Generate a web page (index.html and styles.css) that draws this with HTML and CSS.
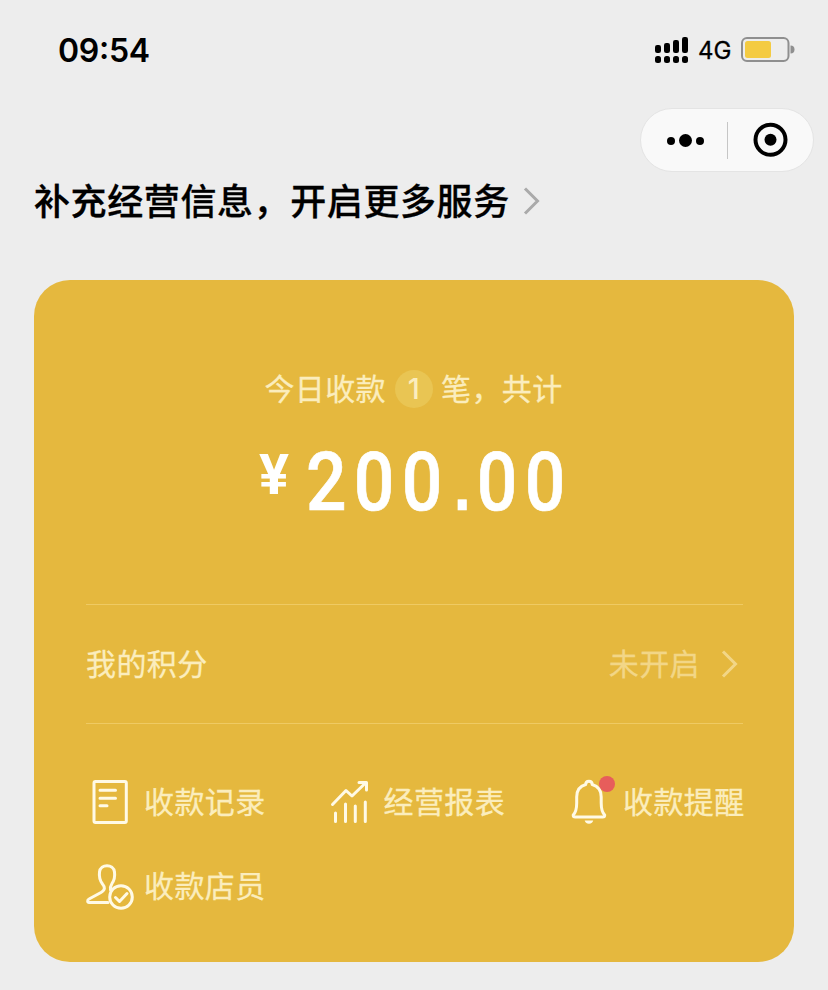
FILE: index.html
```html
<!DOCTYPE html>
<html lang="zh-CN">
<head>
<meta charset="utf-8">
<title>收款</title>
<link rel="stylesheet" href="styles.css">
</head>
<body>
<header class="status">
  <span class="time">09:54</span>
  <div class="status-right">
    <svg class="signal" width="34" height="28" viewBox="0 0 34 28">
      <g><rect x="0" y="8" width="6" height="8" rx="2.200"/><rect x="9" y="6" width="6" height="10" rx="2.200"/><rect x="18" y="3" width="6" height="13" rx="2.200"/><rect x="27" y="0" width="6" height="16" rx="2.200"/>
      <rect x="0" y="19" width="6" height="7" rx="2.500"/><rect x="9" y="19" width="6" height="7" rx="2.500"/><rect x="18" y="19" width="6" height="7" rx="2.500"/><rect x="27" y="19" width="6" height="7" rx="2.500"/></g>
    </svg>
    <span class="network">4G</span>
    <svg class="battery" width="54" height="26" viewBox="0 0 54 26">
      <rect x="1" y="1" width="46.5" height="23" rx="5" fill="none" stroke="#8f8f8f" stroke-width="2"/>
      <rect x="4" y="4" width="26" height="17" rx="2.5" fill="#f4cb42"/>
      <path d="M49.500 8.500a4 4 0 0 1 0 8z" fill="#8f8f8f"/>
    </svg>
  </div>
</header>
<div class="capsule-row">
  <div class="capsule">
    <svg class="more" width="86" height="62" viewBox="0 0 86 62"><circle cx="30" cy="32" r="4"/><circle cx="44.500" cy="31.500" r="6.500"/><circle cx="59" cy="32" r="4"/></svg>
    <span class="capsule-line"></span>
    <svg class="close" width="84" height="62" viewBox="0 0 84 62"><circle cx="42.500" cy="30.800" r="15" fill="none" stroke="#000" stroke-width="4"/><circle cx="42.500" cy="30.800" r="6"/></svg>
  </div>
</div>
<div class="notice">
  <h1>补充经营信息，开启更多服务</h1>
  <svg width="18" height="30" viewBox="0 0 18 30"><path d="M2 2.500L14.500 15L2 27.500" fill="none" stroke="#aaa" stroke-width="3"/></svg>
</div>
<main class="card">
  <div class="summary"><span class="label">今日收款</span><span class="count">1</span><span class="label">笔，共计</span></div>
  <div class="amount"><span class="yen">¥</span><span class="value">200<span class="point">.</span>00</span></div>
  <div class="points">
    <span class="label">我的积分</span>
    <div class="points-state"><span class="label">未开启</span>
      <svg width="18" height="30" viewBox="0 0 18 30"><path d="M2 2.500L14.500 15L2 27.500" fill="none" stroke="currentColor" stroke-width="3"/></svg>
    </div>
  </div>
  <nav class="menu">
    <a class="item"><svg width="50" height="50" viewBox="0 0 50 50"><rect x="8" y="4.500" width="32.300" height="41" rx="1.500"/><path d="M14 13.300h15.500M14 21.300h15.500M14 28.800h7"/></svg><span class="label">收款记录</span></a>
    <a class="item"><svg width="50" height="50" viewBox="0 0 50 50"><path d="M6.500 27.500L20 13.500L26 19L39.500 6M33 5.500H40.500V13M9.500 36v8.500M19.500 27v17.500M29.300 29v15.500M39.300 25v19.500"/></svg><span class="label">经营报表</span></a>
    <a class="item"><svg width="50" height="50" viewBox="0 0 50 50"><g transform="translate(-.8 -2)"><path d="M9 40C12 37 12.500 34 12.500 28V22C12.500 15 16 11 21.500 9.500C21.500 5 28 5 28 9.500C33.500 11 37 15 37 22V28C37 34 37.500 37 40.500 40C40.500 41.500 40 42 38.500 42H11C9.500 42 9 41.500 9 40z"/><path class="solid" d="M20.500 45.500h8.500a4.300 3.700 0 0 1-8.500 0z"/></g><circle class="dot" cx="42" cy="7" r="8"/></svg><span class="label">收款提醒</span></a>
    <a class="item"><svg width="50" height="50" viewBox="0 0 50 50"><path d="M22 41.500H3C1.500 41.500 1 39 3 38L15 31.500C19.500 29 19 26 16.500 23C13.500 19 13 15 13.500 11C14.500 2.500 27.500 2.500 28.500 11C29 15 28.500 19 26 22.500C24.500 25 24 26.500 24.500 29"/><circle cx="35" cy="36" r="11.300"/><path d="M29.500 36.500l4 4l7.500-8"/></svg><span class="label">收款店员</span></a>
  </nav>
</main>
</body>
</html>
```

FILE: styles.css
```css
* { box-sizing: border-box; }
body {
  margin: 0;
  height: 990px;
  overflow: hidden;
  background: #ededed;
  color: #000;
  font-family: "Noto Sans CJK SC", sans-serif;
}
svg { display: block; flex: none; }
.status {
  display: flex;
  align-items: center;
  justify-content: space-between;
  height: 100px;
  padding: 0 33px 0 58px;
  font-family: Inter, sans-serif;
}
.time { font-size: 32px; font-weight: 600; letter-spacing: -.3px; font-feature-settings: "case"; }
.status-right { display: flex; align-items: center; }
.signal { margin-top: 2px; }
.network { width: 34px; margin: 2px 9px 0 9px; font-size: 24px; line-height: 26px; -webkit-text-stroke: .3px; }
.battery { margin-top: -1px; }
.capsule-row { display: flex; justify-content: flex-end; height: 72px; padding: 8px 14px 0 0; }
.capsule {
  display: flex;
  align-items: center;
  width: 174px;
  height: 64px;
  border: 1px solid #e4e4e4;
  border-radius: 32px;
  background: #f9f9f9;
}
.capsule-line { width: 1px; height: 37px; background: #c6c6c6; }
.notice { display: flex; align-items: center; height: 58px; padding-left: 34px; }
.notice h1 { margin: 0; padding-bottom: 3px; font-size: 36px; font-weight: 500; line-height: 55px; letter-spacing: .6px; -webkit-text-stroke: .3px; }
.notice svg { margin-left: 13px; }
.card {
  width: 760px;
  height: 682px;
  margin: 50px 0 0 34px;
  padding: 84px 51px 0 52px;
  border-radius: 36px;
  background: #e5b83e;
  color: #fbedbd;
  font-size: 30px;
  letter-spacing: .4px;
}
.label { padding-bottom: 4px; -webkit-text-stroke: .3px; }
.summary { display: flex; align-items: center; justify-content: center; height: 50px; padding-right: 2px; }
.count {
  width: 38px;
  height: 38px;
  margin: 0 8px 0 9px;
  border-radius: 50%;
  background: #e9c553;
  font-family: Inter, sans-serif;
  font-size: 29px;
  font-weight: 500;
  line-height: 38px;
  text-align: center;
}
.amount {
  display: flex;
  align-items: flex-start;
  height: 190px;
  padding-left: 173px;
  color: #fff;
  font-family: Roboto, sans-serif;
}
.yen { width: 47px; margin-top: 29px; font-size: 56px; font-weight: 700; line-height: 64px; }
.value {
  margin-top: 20px;
  font-size: 82px;
  font-weight: 500;
  line-height: 96px;
  letter-spacing: 8.4px;
  transform: scaleX(.87);
  transform-origin: left;
  -webkit-text-stroke: .7px;
}
.point {
  margin: 0 -1px 0 5px;
  font-family: "Liberation Sans", sans-serif;
  font-size: 68px;
  font-weight: 700;
  line-height: 1;
}
.points {
  display: flex;
  align-items: center;
  justify-content: space-between;
  height: 120px;
  border: solid #efca63;
  border-width: 1px 0;
}
.points-state { display: flex; align-items: center; padding-right: 4px; color: #f2d687; }
.points-state svg { margin-left: 21px; }
.menu {
  display: grid;
  grid-template-columns: repeat(3, 239.5px);
  grid-auto-rows: 84px;
  padding-top: 36px;
}
.item { display: flex; align-items: center; height: 84px; }
.item svg {
  margin: 0 8px 0 0;
  overflow: visible;
  fill: none;
  stroke: #fffae6;
  stroke-width: 3;
  stroke-linecap: round;
  stroke-linejoin: round;
}
.item .solid { fill: #fffae6; stroke: none; }
.item .dot { fill: #e75d5b; stroke: none; }
```
